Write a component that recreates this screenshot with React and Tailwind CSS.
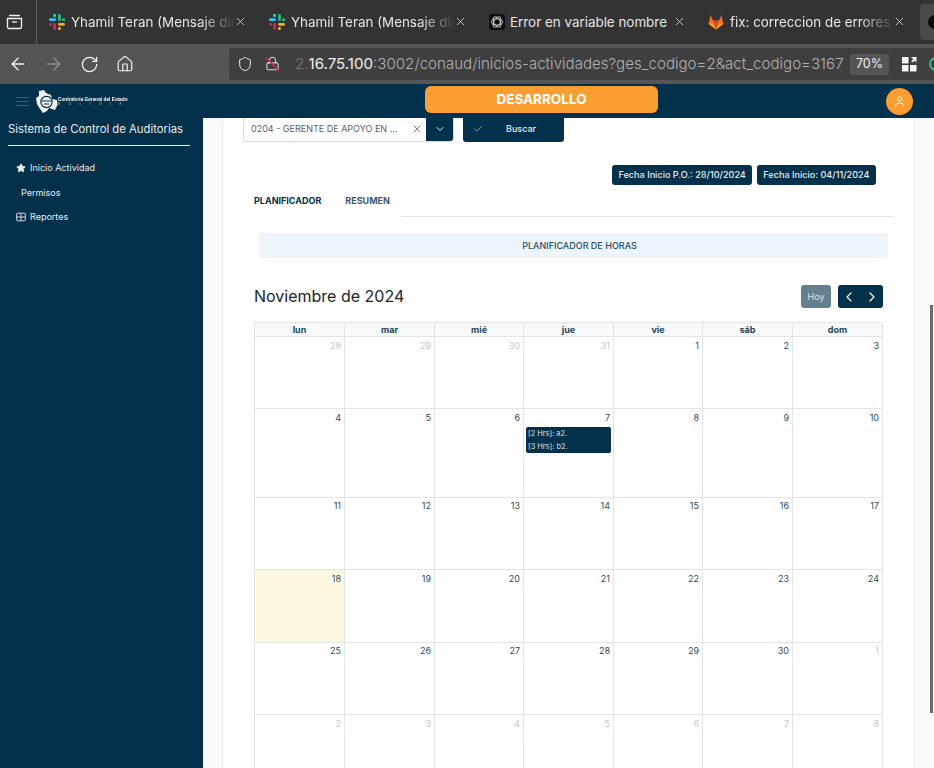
import React from "react";
import { ArrowLeft, ArrowRight, RotateCw, Home, Shield, Lock, X, ChevronDown, ChevronLeft, ChevronRight, Check, Star, User } from "lucide-react";

const Slack = () => (
  <svg width="16" height="16" viewBox="0 0 16 16" className="shrink-0">
    <rect x="0" y="4.2" width="7" height="2.9" rx="1.45" fill="#36C5F0" />
    <rect x="4.1" y="0" width="2.9" height="2.9" rx="1.2" fill="#36C5F0" />
    <rect x="9" y="0" width="2.9" height="7.1" rx="1.45" fill="#2EB67D" />
    <rect x="13.1" y="4.2" width="2.9" height="2.9" rx="1.2" fill="#2EB67D" />
    <rect x="9" y="8.9" width="7" height="2.9" rx="1.45" fill="#ECB22E" />
    <rect x="9" y="13.1" width="2.9" height="2.9" rx="1.2" fill="#ECB22E" />
    <rect x="4.1" y="8.9" width="2.9" height="7.1" rx="1.45" fill="#E01E5A" />
    <rect x="0" y="8.9" width="2.9" height="2.9" rx="1.2" fill="#E01E5A" />
  </svg>
);

const Gpt = () => (
  <svg width="16" height="16" viewBox="0 0 16 16" className="-mr-[1px] shrink-0">
    <rect width="16" height="16" rx="3" fill="#0d0d0d" />
    <g fill="none" stroke="#e8e8e8" strokeWidth="0.8">
      <ellipse cx="8" cy="8" rx="5.8" ry="3.1" />
      <ellipse cx="8" cy="8" rx="5.8" ry="3.1" transform="rotate(60 8 8)" />
      <ellipse cx="8" cy="8" rx="5.8" ry="3.1" transform="rotate(120 8 8)" />
    </g>
  </svg>
);

const Gitlab = () => (
  <svg width="16" height="16" viewBox="0 0 17 16" className="-ml-[1px] shrink-0">
    <polygon points="8.5,16 0.6,9.8 2.8,0.6 5.4,6.6 11.6,6.6 14.2,0.6 16.4,9.8" fill="#FC6D26" />
    <polygon points="8.5,16 5.4,6.6 11.6,6.6" fill="#E24329" />
    <polygon points="8.5,16 0.6,9.8 5.4,9.8" fill="#FCA326" />
    <polygon points="8.5,16 16.4,9.8 11.6,9.8" fill="#FCA326" />
  </svg>
);

const Tab = ({ icon, title, fade }) => (
  <div className="flex w-[220px] shrink-0 items-center pl-[12px] pr-[2px]">
    {icon}
    <span className={`ml-[6px] w-[165px] shrink-0 overflow-hidden whitespace-nowrap text-[13.4px] text-[#e6e6e6] ${fade ? "[mask-image:linear-gradient(to_right,black_78%,transparent)]" : ""}`}>{title}</span>
    <X size={13} strokeWidth={1.4} className="-ml-[2px] shrink-0 text-[#e8e8e8]" />
  </div>
);

const Logo = () => (
  <svg width="22" height="23" viewBox="0 0 22 23" className="shrink-0">
    <polygon points="3,1 8,0 10,3 15,5 16,9 21,10 21.5,15 19,20 13,18 11,21 7,23 4,19 1,14 0,8 3,6" fill="#f2f2f2" />
    <circle cx="10.5" cy="12" r="5.6" fill="none" stroke="#03304a" strokeWidth="1.2" />
    <path d="M6 11h9M8 14h5" stroke="#03304a" strokeWidth="1" />
  </svg>
);

const weeks = [
  { h: "h-[72px]", days: [[28, 1], [29, 1], [30, 1], [31, 1], [1], [2], [3]] },
  { h: "h-[89px]", days: [[4], [5], [6], [7, 0, 1], [8], [9], [10]] },
  { h: "h-[72px]", days: [[11], [12], [13], [14], [15], [16], [17]] },
  { h: "h-[73px]", days: [[18, 0, 0, 1], [19], [20], [21], [22], [23], [24]] },
  { h: "h-[72px]", days: [[25], [26], [27], [28], [29], [30], [1, 1]] },
  { h: "h-[72px]", days: [[2, 1], [3, 1], [4, 1], [5, 1], [6, 1], [7, 1], [8, 1]] },
];

const heads = ["lun", "mar", "mié", "jue", "vie", "sáb", "dom"];
const cols = "grid grid-cols-[90px_90px_89px_90px_89px_90px_90px]";

export default function App() {
  return (
    <div className="flex h-[768px] w-[934px] flex-col overflow-hidden bg-[#f8f9fa] font-['Inter',sans-serif]">
      {/* Tab strip */}
      <div className="flex h-[44px] shrink-0 items-center bg-[#333333]">
        <div className="flex h-full w-[37px] shrink-0 items-center justify-center border-r border-[#5c5c5c]">
          <svg width="17" height="16" viewBox="0 0 17 16" fill="none" stroke="#f0f0f0" strokeWidth="1.3" className="-ml-[8px]">
            <path d="M3 1.5h11M1.5 4.5h14v8.5a1.5 1.5 0 0 1-1.5 1.5H3A1.5 1.5 0 0 1 1.5 13z" />
            <path d="M6 8h5" />
          </svg>
        </div>
        <Tab icon={<Slack />} title="Yhamil Teran (Mensaje directo)" fade />
        <Tab icon={<Slack />} title="Yhamil Teran (Mensaje directo)" fade />
        <Tab icon={<Gpt />} title="Error en variable nombre" />
        <Tab icon={<Gitlab />} title="fix: correccion de errores en" fade />
        <div className="ml-[3px] flex h-[36px] flex-1 items-center self-center rounded-l-[4px] bg-[#4a4a4a] pl-[8px]">
          <div className="h-[14px] w-[14px] shrink-0 rounded-full bg-[#0d0d0d]" />
        </div>
      </div>

      {/* Toolbar */}
      <div className="flex h-[40px] shrink-0 items-center bg-[#555555]">
        <ArrowLeft size={20} strokeWidth={1.6} className="ml-[8px] shrink-0 text-[#f2f2f2]" />
        <ArrowRight size={20} strokeWidth={1.6} className="ml-[16px] shrink-0 text-[#8e8e8e]" />
        <RotateCw size={19} strokeWidth={1.6} className="ml-[16px] shrink-0 text-[#f2f2f2]" />
        <Home size={18} strokeWidth={1.6} className="ml-[17px] shrink-0 text-[#f2f2f2]" />
        <div className="ml-[95px] flex h-[32px] flex-1 items-center rounded-l-[4px] bg-[#3f3f3f]">
          <Shield size={16} strokeWidth={1.5} className="ml-[8px] shrink-0 text-[#efefef]" />
          <div className="relative ml-[12px] h-[16px] w-[16px] shrink-0">
            <Lock size={15} strokeWidth={1.5} className="text-[#efefef]" />
            <svg width="16" height="16" viewBox="0 0 16 16" className="absolute left-0 top-0">
              <path d="M1 1.5l13 13.5" stroke="#e22850" strokeWidth="1.3" />
            </svg>
          </div>
          <span className="ml-[14px] w-[553px] shrink-0 whitespace-nowrap pt-[1px] text-[15.1px] font-light text-[#b0b0b0]">
            <span className="text-[#777777]">2.</span>
            <span className="font-normal text-[#f0f0f0]">16.75.100</span>
            :3002/conaud/inicios-actividades?ges_codigo=2&amp;act_codigo=3167
          </span>
          <span className="ml-[2px] flex h-[21px] w-[39px] shrink-0 items-center justify-center rounded-[3px] bg-[#555555] text-[12.5px] text-[#f0f0f0]">70%</span>
          <svg width="15" height="15" viewBox="0 0 15 15" className="ml-[13px] shrink-0" fill="#f5f5f5">
            <rect x="0" y="0" width="6.5" height="6.5" />
            <rect x="0" y="8" width="6.5" height="6.5" />
            <rect x="8" y="8" width="6.5" height="6.5" />
            <path d="M9 0h5.5v5.5l-2-2-2 2-1.2-1.2 2-2z" />
          </svg>
          <div className="ml-[12px] h-[14px] w-[14px] shrink-0 rounded-full border-2 border-[#3fb58a]" />
        </div>
      </div>

      {/* App header */}
      <div className="flex h-[34px] shrink-0 items-center bg-[#03304a]">
        <div className="ml-[16px] flex w-[13px] flex-col gap-[3px]">
          <span className="h-[1px] bg-[#3d5d70]" />
          <span className="h-[1px] bg-[#3d5d70]" />
          <span className="h-[1px] bg-[#3d5d70]" />
        </div>
        <div className="ml-[7px]"><Logo /></div>
        <div className="flex w-[73px] flex-col leading-none text-white">
          <span className="origin-left scale-x-[0.79] whitespace-nowrap font-['Liberation_Sans',sans-serif] text-[6px] font-bold">Contraloria General del Estado</span>
          <span className="mt-[1px] text-[3.2px] tracking-[8.5px] text-[#c8d2d8]">BOLIVIA</span>
        </div>
        <div className="ml-[294px] flex h-[27px] w-[233px] items-center justify-center rounded-[6px] bg-[#fb9e31] text-[13.5px] font-bold text-white -translate-y-[2px]">DESARROLLO</div>
        <div className="ml-[228px] flex h-[27px] w-[27px] items-center justify-center rounded-full bg-[#fb9e31]">
          <User size={13} strokeWidth={1.6} className="text-white" />
        </div>
      </div>

      {/* Body */}
      <div className="flex min-h-0 flex-1">
        <aside className="w-[203px] shrink-0 bg-[#03304a] text-[#e8edf0]">
          <div className="ml-[8px] mr-[13px] border-b border-[#e8edf0] pb-[5px] text-[11.3px] leading-[22px]">Sistema de Control de Auditorias</div>
          <nav className="mt-[13.5px] flex flex-col gap-[7.5px] text-[9px]">
            <div className="flex h-[17px] items-center pl-[16px]">
              <Star size={10} className="fill-[#e8edf0]" />
              <span className="ml-[4px]">Inicio Actividad</span>
            </div>
            <div className="flex h-[17px] items-center pl-[21px]">Permisos</div>
            <div className="flex h-[17px] items-center pl-[16px]">
              <svg width="10" height="10" viewBox="0 0 10 10" fill="none" stroke="currentColor" strokeWidth="0.9">
                <rect x="0.7" y="1.2" width="8.6" height="7.6" rx="0.8" />
                <path d="M0.7 5h8.6M5 1.2v7.6" />
              </svg>
              <span className="ml-[4px]">Reportes</span>
            </div>
          </nav>
        </aside>

        <main className="relative min-w-0 flex-1 pl-[19px]">
          <div className="h-full w-[693px] border-x border-[#eeeff1] bg-white pl-[20px]">
            {/* Filter */}
            <div className="flex h-[24px] items-start">
              <div className="flex h-[24px] w-[211px] overflow-hidden rounded-b-[4px] border border-t-0 border-[#d8dadd]">
                <div className="flex flex-1 items-center bg-white pb-[2px] pl-[7px] text-[9px] text-[#5a5f66]">
                  <span className="whitespace-nowrap">0204 - GERENTE DE APOYO EN ...</span>
                  <X size={12} strokeWidth={1.4} className="ml-auto mr-[3px] text-[#4a5568]" />
                </div>
                <div className="flex w-[27px] items-center justify-center bg-[#03304a] pb-[2px]">
                  <ChevronDown size={12} className="text-[#e8edf0]" />
                </div>
              </div>
              <div className="ml-[9px] flex h-[24px] w-[101px] items-center rounded-b-[3px] bg-[#03304a] pb-[2px] pl-[10px] text-[9px] font-medium text-[#e8edf0]">
                <Check size={10} strokeWidth={1.4} />
                <span className="ml-[23px]">Buscar</span>
              </div>
            </div>

            {/* Dates */}
            <div className="mt-[23px] flex h-[20px] justify-end gap-[5px] pr-[38px] text-[9.1px] font-medium text-[#e8edf0]">
              <span className="flex items-center whitespace-nowrap rounded-[3px] bg-[#03304a] px-[6px]">Fecha Inicio P.O.: 28/10/2024</span>
              <span className="flex items-center whitespace-nowrap rounded-[3px] bg-[#03304a] px-[6.5px]">Fecha Inicio: 04/11/2024</span>
            </div>

            {/* Tabs */}
            <div className="ml-[11px] mr-[20px] mt-[7px] flex h-[25px] items-start">
              <div className="flex h-[25px] items-center pb-[8px] text-[9px] font-bold">
                <span className="text-[#03304a]">PLANIFICADOR</span>
                <span className="ml-[24px] w-[56px] text-[#3c5568]">RESUMEN</span>
              </div>
              <div className="h-[25px] flex-1 border-b border-[#e3e5e8]" />
            </div>

            {/* Banner */}
            <div className="ml-[16px] mr-[26px] mt-[16px] flex h-[25px] items-center justify-center rounded-[3px] bg-[#eef4fc] pl-[12px] text-[9px] font-medium text-[#1f5066]">
              PLANIFICADOR DE HORAS
            </div>

            {/* Calendar toolbar */}
            <div className="ml-[11px] mr-[31px] mt-[27px] flex h-[23px] items-center justify-between">
              <h2 className="pb-[2px] text-[16px] font-normal text-[#212529]">Noviembre de 2024</h2>
              <div className="flex gap-[7px]">
                <div className="flex h-[23px] w-[30px] items-center justify-center rounded-[3px] bg-[#67808f] text-[9px] text-[#dfe5e9]">Hoy</div>
                <div className="flex h-[23px] w-[45px] items-center justify-around rounded-[3px] bg-[#03304a] text-white">
                  <ChevronLeft size={16} strokeWidth={1.8} />
                  <ChevronRight size={16} strokeWidth={1.8} />
                </div>
              </div>
            </div>

            {/* Calendar */}
            <div className="ml-[11px] mt-[14px] w-[629px] border-l border-t border-[#e3e5e8]">
              <div className={`${cols} h-[14px] bg-[#f8f9fa]`}>
                {heads.map((d) => (
                  <div key={d} className="flex items-center justify-center border-b border-r border-[#e3e5e8] text-[9px] font-bold leading-none text-[#1f4559]">{d}</div>
                ))}
              </div>
              {weeks.map((w, i) => (
                <div key={i} className={`${cols} ${w.h}`}>
                  {w.days.map(([n, muted, events, today], j) => (
                    <div key={j} className={`border-b border-r border-[#e3e5e8] ${i === 2 || i === 4 ? "pt-[2px]" : "pt-[3px]"} ${today ? "bg-[#fff8e1]" : ""}`}>
                      <div className={`pr-[3px] text-right text-[9px] leading-[12px] ${muted ? "text-[#c2c9ce]" : "text-[#2f4a5a]"}`}>{n}</div>
                      {events ? (
                        <div className="ml-[2px] mr-[2px] mt-[3px] flex flex-col rounded-[2px] bg-[#03304a] text-[7.4px] text-[#dbe3e8]">
                          <div className="flex h-[13px] items-center pl-[2px]">[2 Hrs]: a2.</div>
                          <div className="flex h-[13px] items-center pl-[2px]">[3 Hrs]: b2.</div>
                        </div>
                      ) : null}
                    </div>
                  ))}
                </div>
              ))}
            </div>
          </div>
          <div className="absolute right-[1px] top-[187px] h-[408px] w-[3px] bg-[#6b6b6b]" />
        </main>
      </div>
    </div>
  );
}
